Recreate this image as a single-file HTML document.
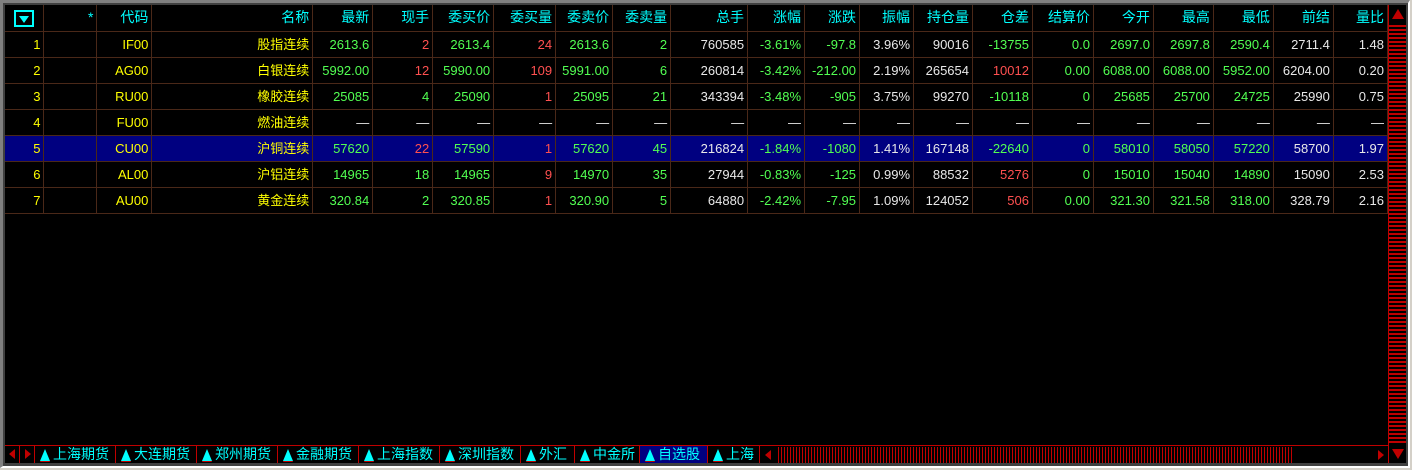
<!DOCTYPE html>
<html><head><meta charset="utf-8"><style>
*{margin:0;padding:0;box-sizing:border-box}
body{width:1412px;height:470px;background:#d4d0c8;overflow:hidden;position:relative;font-family:"Liberation Sans","Noto Sans CJK SC",sans-serif;font-size:13px}
#frame{position:absolute;left:0;top:0;width:1410px;height:468px;border-top:3px solid #808080;border-left:3px solid #808080;border-right:2px solid #fff;border-bottom:2px solid #fff;background:#404040}
#main{position:absolute;left:5px;top:5px;width:1383px;height:440px;background:#000;overflow:hidden}
table{border-collapse:collapse;table-layout:fixed;position:absolute;left:0;top:0}
td{height:26px;border-right:1px solid #4a2818;border-bottom:1px solid #4a2818;text-align:right;padding-right:3px;white-space:nowrap;overflow:hidden;color:#52ff52;line-height:25px}
tr.h td{color:#00ffff;font-size:14px}
td.y{color:#ffff00}.r{color:#ff5050!important}.w{color:#e8e8e8!important}
tr.sel td{background:#000080}
#vs{position:absolute;left:1388px;top:5px;width:18px;height:458px;background:repeating-linear-gradient(#c00000 0 2px,#000 2px 4px);border-left:1px solid #c00000}
#tabs{position:absolute;left:5px;top:445px;width:1383px;height:18px;background:#000;border-top:1px solid #c00000;color:#00ffff;font-size:14px}
.t{position:absolute;top:0;height:17px;border-right:1px solid #c00000;line-height:17px;padding-left:18px}
.t:before{content:"";position:absolute;left:5px;top:3px;border-left:5px solid transparent;border-right:5px solid transparent;border-bottom:12px solid #00ffff;filter:drop-shadow(0 1px 0 #c00000)}
#hs{position:absolute;left:755px;top:1px;width:628px;height:16px;background:repeating-linear-gradient(90deg,#c00000 0 1px,#000 1px 3px)}
</style></head><body>
<div id="frame"></div>
<div id="main">
<table>
<colgroup><col style="width:39px"><col style="width:53px"><col style="width:55px"><col style="width:161px"><col style="width:60px"><col style="width:60px"><col style="width:61px"><col style="width:62px"><col style="width:57px"><col style="width:58px"><col style="width:77px"><col style="width:57px"><col style="width:55px"><col style="width:54px"><col style="width:59px"><col style="width:60px"><col style="width:61px"><col style="width:60px"><col style="width:60px"><col style="width:60px"><col style="width:60px"><col style="width:54px"></colgroup>
<tr class="h"><td style="text-align:center;padding:0"><span style="display:inline-block;width:20px;height:17px;border:2px solid #00ffff;vertical-align:middle;position:relative"><span style="position:absolute;left:3px;top:4px;border-left:5px solid transparent;border-right:5px solid transparent;border-top:7px solid #00ffff"></span></span></td><td>*</td><td>代码</td><td>名称</td><td>最新</td><td>现手</td><td>委买价</td><td>委买量</td><td>委卖价</td><td>委卖量</td><td>总手</td><td>涨幅</td><td>涨跌</td><td>振幅</td><td>持仓量</td><td>仓差</td><td>结算价</td><td>今开</td><td>最高</td><td>最低</td><td>前结</td><td>量比</td></tr>
<tr><td class="y">1</td><td></td><td class="y">IF00</td><td class="y">股指连续</td><td>2613.6</td><td class="r">2</td><td>2613.4</td><td class="r">24</td><td>2613.6</td><td>2</td><td class="w">760585</td><td>-3.61%</td><td>-97.8</td><td class="w">3.96%</td><td class="w">90016</td><td>-13755</td><td>0.0</td><td>2697.0</td><td>2697.8</td><td>2590.4</td><td class="w">2711.4</td><td class="w">1.48</td></tr>
<tr><td class="y">2</td><td></td><td class="y">AG00</td><td class="y">白银连续</td><td>5992.00</td><td class="r">12</td><td>5990.00</td><td class="r">109</td><td>5991.00</td><td>6</td><td class="w">260814</td><td>-3.42%</td><td>-212.00</td><td class="w">2.19%</td><td class="w">265654</td><td class="r">10012</td><td>0.00</td><td>6088.00</td><td>6088.00</td><td>5952.00</td><td class="w">6204.00</td><td class="w">0.20</td></tr>
<tr><td class="y">3</td><td></td><td class="y">RU00</td><td class="y">橡胶连续</td><td>25085</td><td>4</td><td>25090</td><td class="r">1</td><td>25095</td><td>21</td><td class="w">343394</td><td>-3.48%</td><td>-905</td><td class="w">3.75%</td><td class="w">99270</td><td>-10118</td><td>0</td><td>25685</td><td>25700</td><td>24725</td><td class="w">25990</td><td class="w">0.75</td></tr>
<tr><td class="y">4</td><td></td><td class="y">FU00</td><td class="y">燃油连续</td><td class="w">—</td><td class="w">—</td><td class="w">—</td><td class="w">—</td><td class="w">—</td><td class="w">—</td><td class="w">—</td><td class="w">—</td><td class="w">—</td><td class="w">—</td><td class="w">—</td><td class="w">—</td><td class="w">—</td><td class="w">—</td><td class="w">—</td><td class="w">—</td><td class="w">—</td><td class="w">—</td></tr>
<tr class="sel"><td class="y">5</td><td></td><td class="y">CU00</td><td class="y">沪铜连续</td><td>57620</td><td class="r">22</td><td>57590</td><td class="r">1</td><td>57620</td><td>45</td><td class="w">216824</td><td>-1.84%</td><td>-1080</td><td class="w">1.41%</td><td class="w">167148</td><td>-22640</td><td>0</td><td>58010</td><td>58050</td><td>57220</td><td class="w">58700</td><td class="w">1.97</td></tr>
<tr><td class="y">6</td><td></td><td class="y">AL00</td><td class="y">沪铝连续</td><td>14965</td><td>18</td><td>14965</td><td class="r">9</td><td>14970</td><td>35</td><td class="w">27944</td><td>-0.83%</td><td>-125</td><td class="w">0.99%</td><td class="w">88532</td><td class="r">5276</td><td>0</td><td>15010</td><td>15040</td><td>14890</td><td class="w">15090</td><td class="w">2.53</td></tr>
<tr><td class="y">7</td><td></td><td class="y">AU00</td><td class="y">黄金连续</td><td>320.84</td><td>2</td><td>320.85</td><td class="r">1</td><td>320.90</td><td>5</td><td class="w">64880</td><td>-2.42%</td><td>-7.95</td><td class="w">1.09%</td><td class="w">124052</td><td class="r">506</td><td>0.00</td><td>321.30</td><td>321.58</td><td>318.00</td><td class="w">328.79</td><td class="w">2.16</td></tr>
</table>
</div>
<div id="vs"><div style="position:absolute;left:0;top:0;width:17px;height:18px;background:#000"><div style="position:absolute;left:3px;top:4px;border-left:6px solid transparent;border-right:6px solid transparent;border-bottom:10px solid #c00000"></div></div><div style="position:absolute;left:0;top:440px;width:17px;height:18px;background:#000"><div style="position:absolute;left:3px;top:4px;border-left:6px solid transparent;border-right:6px solid transparent;border-top:10px solid #c00000"></div></div></div>
<div id="tabs">
<div style="position:absolute;left:0;top:0;width:15px;height:17px;border-right:1px solid #c00000"><div style="position:absolute;left:4px;top:3px;border-top:5px solid transparent;border-bottom:5px solid transparent;border-right:6px solid #c00000"></div></div>
<div style="position:absolute;left:15px;top:0;width:15px;height:17px;border-right:1px solid #c00000"><div style="position:absolute;left:5px;top:3px;border-top:5px solid transparent;border-bottom:5px solid transparent;border-left:6px solid #c00000"></div></div>
<div class="t" style="left:30px;width:81px">上海期货</div>
<div class="t" style="left:111px;width:81px">大连期货</div>
<div class="t" style="left:192px;width:81px">郑州期货</div>
<div class="t" style="left:273px;width:81px">金融期货</div>
<div class="t" style="left:354px;width:81px">上海指数</div>
<div class="t" style="left:435px;width:81px">深圳指数</div>
<div class="t" style="left:516px;width:54px">外汇</div>
<div class="t" style="left:570px;width:65px">中金所</div>
<div class="t" style="left:635px;width:68px;background:#000080">自选股</div>
<div class="t" style="left:703px;width:52px">上海</div>
<div id="hs"><div style="position:absolute;left:0;top:0;width:16px;height:16px;background:#000"><div style="position:absolute;left:5px;top:3px;border-top:5px solid transparent;border-bottom:5px solid transparent;border-right:6px solid #c00000"></div></div><div style="position:absolute;left:533px;top:0;width:82px;height:16px;background:#000"></div><div style="position:absolute;right:0;top:0;width:13px;height:16px;background:#000"><div style="position:absolute;left:3px;top:3px;border-top:5px solid transparent;border-bottom:5px solid transparent;border-left:6px solid #c00000"></div></div></div>
</div>
</body></html>
